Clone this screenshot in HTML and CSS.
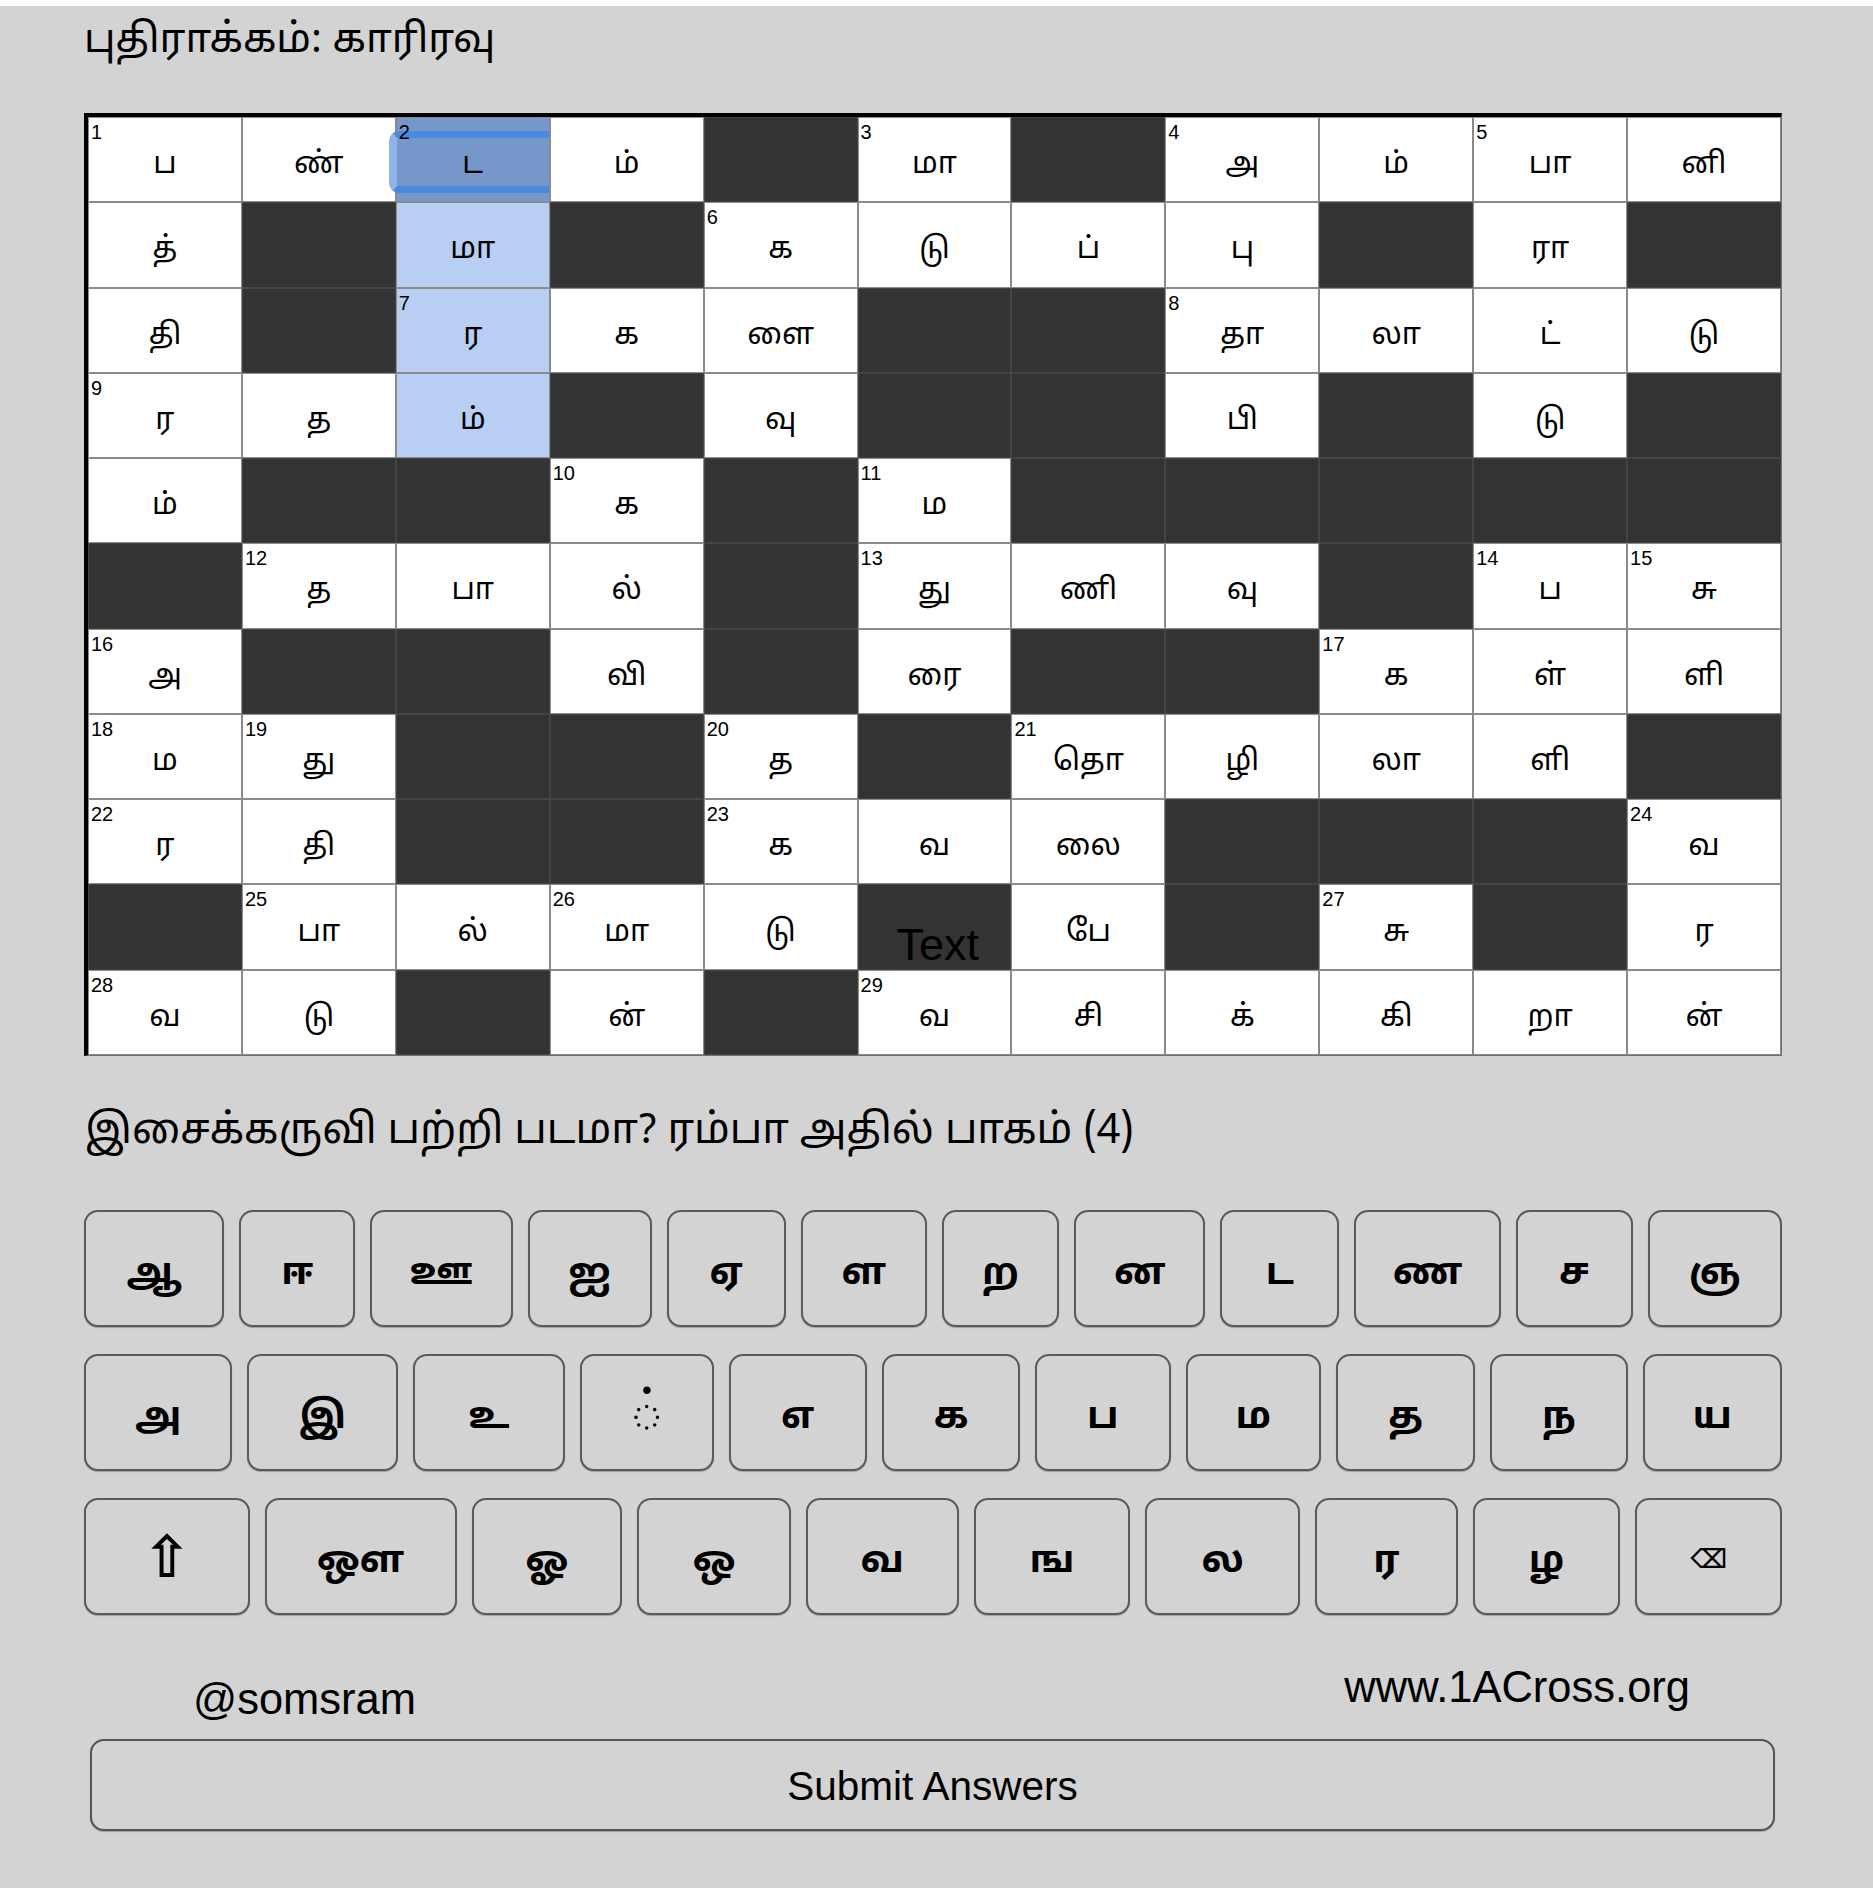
FILE: index.html
```html
<!DOCTYPE html>
<html lang="ta">
<head>
<meta charset="utf-8">
<title>1ACross</title>
<link rel="stylesheet" href="styles.css">
</head>
<body>
<div class="page">
  <h1 class="title">புதிராக்கம்: காரிரவு</h1>

  <div class="grid">
    <div class="cell"><span class="num">1</span><span class="ch">ப</span></div>
    <div class="cell"><span class="ch">ண்</span></div>
    <div class="cell sel"><span class="num">2</span><span class="ch">ட</span></div>
    <div class="cell"><span class="ch">ம்</span></div>
    <div class="cell blk"></div>
    <div class="cell"><span class="num">3</span><span class="ch">மா</span></div>
    <div class="cell blk"></div>
    <div class="cell"><span class="num">4</span><span class="ch">அ</span></div>
    <div class="cell"><span class="ch">ம்</span></div>
    <div class="cell"><span class="num">5</span><span class="ch">பா</span></div>
    <div class="cell"><span class="ch">னி</span></div>

    <div class="cell"><span class="ch">த்</span></div>
    <div class="cell blk"></div>
    <div class="cell hl"><span class="ch">மா</span></div>
    <div class="cell blk"></div>
    <div class="cell"><span class="num">6</span><span class="ch">க</span></div>
    <div class="cell"><span class="ch">டு</span></div>
    <div class="cell"><span class="ch">ப்</span></div>
    <div class="cell"><span class="ch">பு</span></div>
    <div class="cell blk"></div>
    <div class="cell"><span class="ch">ரா</span></div>
    <div class="cell blk"></div>

    <div class="cell"><span class="ch">தி</span></div>
    <div class="cell blk"></div>
    <div class="cell hl"><span class="num">7</span><span class="ch">ர</span></div>
    <div class="cell"><span class="ch">க</span></div>
    <div class="cell"><span class="ch">ளை</span></div>
    <div class="cell blk"></div>
    <div class="cell blk"></div>
    <div class="cell"><span class="num">8</span><span class="ch">தா</span></div>
    <div class="cell"><span class="ch">லா</span></div>
    <div class="cell"><span class="ch">ட்</span></div>
    <div class="cell"><span class="ch">டு</span></div>

    <div class="cell"><span class="num">9</span><span class="ch">ர</span></div>
    <div class="cell"><span class="ch">த</span></div>
    <div class="cell hl"><span class="ch">ம்</span></div>
    <div class="cell blk"></div>
    <div class="cell"><span class="ch">வு</span></div>
    <div class="cell blk"></div>
    <div class="cell blk"></div>
    <div class="cell"><span class="ch">பி</span></div>
    <div class="cell blk"></div>
    <div class="cell"><span class="ch">டு</span></div>
    <div class="cell blk"></div>

    <div class="cell"><span class="ch">ம்</span></div>
    <div class="cell blk"></div>
    <div class="cell blk"></div>
    <div class="cell"><span class="num">10</span><span class="ch">க</span></div>
    <div class="cell blk"></div>
    <div class="cell"><span class="num">11</span><span class="ch">ம</span></div>
    <div class="cell blk"></div>
    <div class="cell blk"></div>
    <div class="cell blk"></div>
    <div class="cell blk"></div>
    <div class="cell blk"></div>

    <div class="cell blk"></div>
    <div class="cell"><span class="num">12</span><span class="ch">த</span></div>
    <div class="cell"><span class="ch">பா</span></div>
    <div class="cell"><span class="ch">ல்</span></div>
    <div class="cell blk"></div>
    <div class="cell"><span class="num">13</span><span class="ch">து</span></div>
    <div class="cell"><span class="ch">ணி</span></div>
    <div class="cell"><span class="ch">வு</span></div>
    <div class="cell blk"></div>
    <div class="cell"><span class="num">14</span><span class="ch">ப</span></div>
    <div class="cell"><span class="num">15</span><span class="ch">சு</span></div>

    <div class="cell"><span class="num">16</span><span class="ch">அ</span></div>
    <div class="cell blk"></div>
    <div class="cell blk"></div>
    <div class="cell"><span class="ch">வி</span></div>
    <div class="cell blk"></div>
    <div class="cell"><span class="ch">ரை</span></div>
    <div class="cell blk"></div>
    <div class="cell blk"></div>
    <div class="cell"><span class="num">17</span><span class="ch">க</span></div>
    <div class="cell"><span class="ch">ள்</span></div>
    <div class="cell"><span class="ch">ளி</span></div>

    <div class="cell"><span class="num">18</span><span class="ch">ம</span></div>
    <div class="cell"><span class="num">19</span><span class="ch">து</span></div>
    <div class="cell blk"></div>
    <div class="cell blk"></div>
    <div class="cell"><span class="num">20</span><span class="ch">த</span></div>
    <div class="cell blk"></div>
    <div class="cell"><span class="num">21</span><span class="ch">தொ</span></div>
    <div class="cell"><span class="ch">ழி</span></div>
    <div class="cell"><span class="ch">லா</span></div>
    <div class="cell"><span class="ch">ளி</span></div>
    <div class="cell blk"></div>

    <div class="cell"><span class="num">22</span><span class="ch">ர</span></div>
    <div class="cell"><span class="ch">தி</span></div>
    <div class="cell blk"></div>
    <div class="cell blk"></div>
    <div class="cell"><span class="num">23</span><span class="ch">க</span></div>
    <div class="cell"><span class="ch">வ</span></div>
    <div class="cell"><span class="ch">லை</span></div>
    <div class="cell blk"></div>
    <div class="cell blk"></div>
    <div class="cell blk"></div>
    <div class="cell"><span class="num">24</span><span class="ch">வ</span></div>

    <div class="cell blk"></div>
    <div class="cell"><span class="num">25</span><span class="ch">பா</span></div>
    <div class="cell"><span class="ch">ல்</span></div>
    <div class="cell"><span class="num">26</span><span class="ch">மா</span></div>
    <div class="cell"><span class="ch">டு</span></div>
    <div class="cell blk"><span class="stray">Text</span></div>
    <div class="cell"><span class="ch">பே</span></div>
    <div class="cell blk"></div>
    <div class="cell"><span class="num">27</span><span class="ch">சு</span></div>
    <div class="cell blk"></div>
    <div class="cell"><span class="ch">ர</span></div>

    <div class="cell"><span class="num">28</span><span class="ch">வ</span></div>
    <div class="cell"><span class="ch">டு</span></div>
    <div class="cell blk"></div>
    <div class="cell"><span class="ch">ன்</span></div>
    <div class="cell blk"></div>
    <div class="cell"><span class="num">29</span><span class="ch">வ</span></div>
    <div class="cell"><span class="ch">சி</span></div>
    <div class="cell"><span class="ch">க்</span></div>
    <div class="cell"><span class="ch">கி</span></div>
    <div class="cell"><span class="ch">றா</span></div>
    <div class="cell"><span class="ch">ன்</span></div>
  </div>

  <p class="clue">இசைக்கருவி பற்றி படமா? ரம்பா அதில் பாகம் (4)</p>

  <div class="keyboard">
    <div class="krow r1">
      <button class="key">ஆ</button><button class="key">ஈ</button><button class="key">ஊ</button><button class="key">ஐ</button><button class="key">ஏ</button><button class="key">ள</button><button class="key">ற</button><button class="key">ன</button><button class="key">ட</button><button class="key">ண</button><button class="key">ச</button><button class="key">ஞ</button>
    </div>
    <div class="krow r2">
      <button class="key">அ</button><button class="key">இ</button><button class="key">உ</button><button class="key pulli">்</button><button class="key">எ</button><button class="key">க</button><button class="key">ப</button><button class="key">ம</button><button class="key">த</button><button class="key">ந</button><button class="key">ய</button>
    </div>
    <div class="krow r3">
      <button class="key shift">⇧</button><button class="key">ஔ</button><button class="key">ஓ</button><button class="key">ஒ</button><button class="key">வ</button><button class="key">ங</button><button class="key">ல</button><button class="key">ர</button><button class="key">ழ</button><button class="key bksp">⌫</button>
    </div>
  </div>

  <div class="footer">
    <span class="handle">@somsram</span>
    <span class="site">www.1ACross.org</span>
  </div>

  <button class="submit">Submit Answers</button>
</div>
</body>
</html>
```

FILE: styles.css
```css
html {
  background: #ffffff;
}

body {
  margin: 6px 0 0;
  background: #d3d3d3;
  min-height: 1882px;
  color: #000;
  font-family: "Liberation Sans", Arial, sans-serif;
}

.page {
  width: 1698px;
  margin-left: 84px;
  padding-top: 1px;
}

.title {
  margin: 11px 0 0 0;
  font-family: "Noto Sans Tamil", "Lohit Tamil", "Noto Sans", sans-serif;
  font-weight: normal;
  font-size: 40.5px;
  line-height: 48px;
  height: 48px;
}

.grid {
  margin-top: 47px;
  box-sizing: border-box;
  width: 1698px;
  height: 943px;
  display: grid;
  grid-template-columns: repeat(11, 1fr);
  grid-template-rows: repeat(11, 1fr);
  border-top: 4px solid #000;
  border-left: 4px solid #000;
  border-right: 1px solid #707070;
  border-bottom: 1px solid #707070;
  background: #fff;
}

.cell {
  position: relative;
  background: #fff;
  border: 1px solid #8a8a8a;
  display: flex;
  align-items: center;
  justify-content: center;
  padding-top: 12px;
  font-family: "Noto Sans Tamil", "Lohit Tamil", "Noto Sans", sans-serif;
  font-size: 30px;
}

.cell.blk {
  background: #333333;
  border-color: #444444;
}

.cell.hl {
  background: #b8cff3;
}

.cell.sel {
  background: #7597c9;
  z-index: 2;
}

.cell.sel::after {
  content: "";
  position: absolute;
  z-index: 0;
  left: -8px;
  right: 0;
  top: 13px;
  bottom: 8px;
  border-top: 7px solid #4b89de;
  border-bottom: 7px solid #4b89de;
  border-left: 8px solid #8fb4ec;
  border-radius: 10px 0 0 10px;
  pointer-events: none;
}

.num {
  position: absolute;
  z-index: 1;
  left: 2px;
  top: 4px;
  font-family: "Liberation Sans", Arial, sans-serif;
  font-size: 20px;
  line-height: 1;
}

.ch {
  position: relative;
  z-index: 1;
}

.stray {
  position: absolute;
  left: 38px;
  top: 37px;
  font-family: "Liberation Sans", Arial, sans-serif;
  font-size: 45px;
  line-height: 1;
  color: #000;
}

.clue {
  margin: 47px 0 0 1px;
  height: 60px;
  font-family: "Noto Sans Tamil", "Lohit Tamil", "Noto Sans", sans-serif;
  font-size: 41.7px;
  line-height: 60px;
}

.keyboard {
  margin-top: 47px;
  display: flex;
  flex-direction: column;
  gap: 27px;
}

.krow {
  display: grid;
  column-gap: 15px;
  height: 117px;
}

.r1 {
  grid-template-columns: 140fr 116fr 142fr 124fr 119fr 126fr 117fr 131fr 119fr 146fr 117fr 134fr;
}

.r2 {
  grid-template-columns: 148fr 150fr 152fr 133fr 138fr 138fr 135fr 135fr 139fr 137fr 139fr;
}

.r3 {
  grid-template-columns: 165fr 191fr 150fr 153fr 152fr 156fr 154fr 142fr 147fr 146fr;
}

.key {
  margin: 0;
  padding: 12px 0 0;
  min-width: 0;
  background: #d3d3d3;
  border: 2px solid #5a5a5a;
  border-radius: 14px;
  box-shadow: 0 1px 1px rgba(0, 0, 0, 0.25);
  color: #000;
  font-family: "Noto Sans Tamil", "Lohit Tamil", "Noto Sans", sans-serif;
  font-weight: bold;
  font-size: 38px;
  line-height: 1;
}

.key.pulli {
  font-size: 56px;
  font-weight: normal;
  padding-top: 10px;
}

.key.shift {
  font-family: "DejaVu Sans", sans-serif;
  font-weight: bold;
  font-size: 58px;
  padding-top: 0;
}

.key.bksp {
  font-family: "DejaVu Sans", sans-serif;
  font-size: 26px;
  font-weight: bold;
  padding-top: 4px;
}

.footer {
  margin-top: 48px;
  height: 76px;
  display: flex;
  justify-content: space-between;
  align-items: flex-start;
  padding: 0 92px 0 109px;
  font-family: "Liberation Sans", Arial, sans-serif;
  font-size: 43.5px;
  line-height: 48px;
}

.handle {
  margin-top: 12px;
}

.submit {
  display: block;
  margin: 0 0 0 6px;
  width: 1685px;
  height: 92px;
  padding-top: 4px;
  background: #d3d3d3;
  border: 2px solid #555;
  border-radius: 14px;
  box-shadow: 0 1px 1px rgba(0, 0, 0, 0.25);
  color: #000;
  font-family: "Liberation Sans", Arial, sans-serif;
  font-size: 40.5px;
}
```
